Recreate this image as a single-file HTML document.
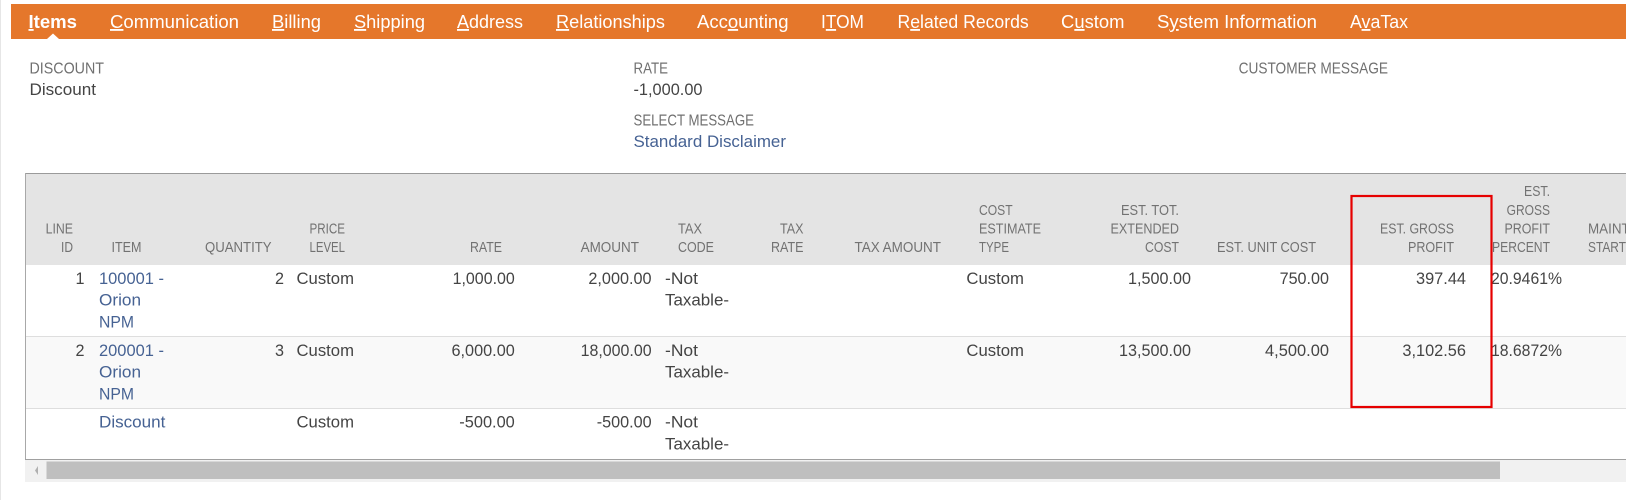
<!DOCTYPE html>
<html lang="en"><head><meta charset="utf-8"><title>Items</title>
<style>
html,body{margin:0;padding:0;background:#fff;width:1626px;height:500px;overflow:hidden}
svg{display:block}
text{font-family:"Liberation Sans",sans-serif;white-space:pre}
.n{font-size:18.5px;fill:#fff}
.l{font-size:15.5px;fill:#707070}
.h{font-size:14.8px;fill:#727272}
.v{font-size:17px;fill:#444}
.a{font-size:17px;fill:#466293}
</style></head><body>
<svg xmlns="http://www.w3.org/2000/svg" width="1626" height="500" viewBox="0 0 1626 500">
<rect x="0" y="0" width="1" height="500" fill="#e6e6e6"/>
<rect x="11" y="4" width="1615" height="35" fill="#e5772b"/>
<polygon points="47,39 53,33.500 59,39" fill="#fff"/>
<g class="nav">
<text class="n" y="28" x="28.500" textLength="48.500" lengthAdjust="spacingAndGlyphs" font-weight="700"><tspan text-decoration="underline">I</tspan>tems</text>
<text class="n" y="28" x="110" textLength="129" lengthAdjust="spacingAndGlyphs"><tspan text-decoration="underline">C</tspan>ommunication</text>
<text class="n" y="28" x="272" textLength="49" lengthAdjust="spacingAndGlyphs"><tspan text-decoration="underline">B</tspan>illing</text>
<text class="n" y="28" x="354" textLength="71" lengthAdjust="spacingAndGlyphs"><tspan text-decoration="underline">S</tspan>hipping</text>
<text class="n" y="28" x="457" textLength="66" lengthAdjust="spacingAndGlyphs"><tspan text-decoration="underline">A</tspan>ddress</text>
<text class="n" y="28" x="556" textLength="109" lengthAdjust="spacingAndGlyphs"><tspan text-decoration="underline">R</tspan>elationships</text>
<text class="n" y="28" x="697" textLength="91.500" lengthAdjust="spacingAndGlyphs">Acc<tspan text-decoration="underline">o</tspan>unting</text>
<text class="n" y="28" x="821" textLength="43" lengthAdjust="spacingAndGlyphs">I<tspan text-decoration="underline">T</tspan>OM</text>
<text class="n" y="28" x="897.500" textLength="131.200" lengthAdjust="spacingAndGlyphs">R<tspan text-decoration="underline">e</tspan>lated Records</text>
<text class="n" y="28" x="1061" textLength="63.500" lengthAdjust="spacingAndGlyphs">C<tspan text-decoration="underline">u</tspan>stom</text>
<text class="n" y="28" x="1157" textLength="160" lengthAdjust="spacingAndGlyphs">S<tspan text-decoration="underline">y</tspan>stem Information</text>
<text class="n" y="28" x="1350" textLength="58" lengthAdjust="spacingAndGlyphs">A<tspan text-decoration="underline">v</tspan>aTax</text>
</g>
<text class="l" y="73.500" x="29.500" textLength="74.500" lengthAdjust="spacingAndGlyphs">DISCOUNT</text>
<text class="v" y="95" x="29.500" textLength="66.500" lengthAdjust="spacingAndGlyphs">Discount</text>
<text class="l" y="73.500" x="633.500" textLength="34.500" lengthAdjust="spacingAndGlyphs">RATE</text>
<text class="v" y="95" x="633.500" textLength="69" lengthAdjust="spacingAndGlyphs">-1,000.00</text>
<text class="l" y="125.500" x="633.500" textLength="120.500" lengthAdjust="spacingAndGlyphs">SELECT MESSAGE</text>
<text class="a" y="147" x="633.500" textLength="152.500" lengthAdjust="spacingAndGlyphs">Standard Disclaimer</text>
<text class="l" y="73.500" x="1238.600" textLength="149.400" lengthAdjust="spacingAndGlyphs">CUSTOMER MESSAGE</text>

<rect x="25" y="174" width="1601" height="91" fill="#e4e4e4"/>
<rect x="25" y="337" width="1601" height="71" fill="#f9f9f9"/>
<rect x="25" y="173" width="1601" height="1" fill="#9a9a9a"/>
<rect x="25" y="173" width="1" height="287" fill="#a8a8a8"/>
<rect x="26" y="336" width="1600" height="1" fill="#dedede"/>
<rect x="26" y="408" width="1600" height="1" fill="#dedede"/>
<rect x="25" y="459" width="1601" height="1" fill="#a0a0a0"/>
<rect x="25" y="460" width="1601" height="22" fill="#f1f1f1"/>
<rect x="46.500" y="461.500" width="1453.500" height="17.500" fill="#bfbfbf"/>
<polygon points="38,466 35,470.500 38,475" fill="#b0b0b0"/>

<text class="h" y="233.500" x="45.600" textLength="27.400" lengthAdjust="spacingAndGlyphs">LINE</text>
<text class="h" y="252" x="61" textLength="12" lengthAdjust="spacingAndGlyphs">ID</text>
<text class="h" y="252" x="111.500" textLength="30" lengthAdjust="spacingAndGlyphs">ITEM</text>
<text class="h" y="252" x="205" textLength="66.600" lengthAdjust="spacingAndGlyphs">QUANTITY</text>
<text class="h" y="233.500" x="309.500" textLength="35.500" lengthAdjust="spacingAndGlyphs">PRICE</text>
<text class="h" y="252" x="309.500" textLength="35.500" lengthAdjust="spacingAndGlyphs">LEVEL</text>
<text class="h" y="252" x="470" textLength="32" lengthAdjust="spacingAndGlyphs">RATE</text>
<text class="h" y="252" x="580.600" textLength="58.400" lengthAdjust="spacingAndGlyphs">AMOUNT</text>
<text class="h" y="233.500" x="678" textLength="24" lengthAdjust="spacingAndGlyphs">TAX</text>
<text class="h" y="252" x="678" textLength="36" lengthAdjust="spacingAndGlyphs">CODE</text>
<text class="h" y="233.500" x="780" textLength="23.500" lengthAdjust="spacingAndGlyphs">TAX</text>
<text class="h" y="252" x="771" textLength="32.500" lengthAdjust="spacingAndGlyphs">RATE</text>
<text class="h" y="252" x="854.500" textLength="86.500" lengthAdjust="spacingAndGlyphs">TAX AMOUNT</text>
<text class="h" y="215" x="979" textLength="33.600" lengthAdjust="spacingAndGlyphs">COST</text>
<text class="h" y="233.500" x="979" textLength="62" lengthAdjust="spacingAndGlyphs">ESTIMATE</text>
<text class="h" y="252" x="979" textLength="30" lengthAdjust="spacingAndGlyphs">TYPE</text>
<text class="h" y="215" x="1121" textLength="58" lengthAdjust="spacingAndGlyphs">EST. TOT.</text>
<text class="h" y="233.500" x="1110.500" textLength="68.500" lengthAdjust="spacingAndGlyphs">EXTENDED</text>
<text class="h" y="252" x="1145" textLength="34" lengthAdjust="spacingAndGlyphs">COST</text>
<text class="h" y="252" x="1217" textLength="99" lengthAdjust="spacingAndGlyphs">EST. UNIT COST</text>
<text class="h" y="233.500" x="1380" textLength="74" lengthAdjust="spacingAndGlyphs">EST. GROSS</text>
<text class="h" y="252" x="1408" textLength="46" lengthAdjust="spacingAndGlyphs">PROFIT</text>
<text class="h" y="196" x="1524" textLength="26" lengthAdjust="spacingAndGlyphs">EST.</text>
<text class="h" y="215" x="1506.600" textLength="43.400" lengthAdjust="spacingAndGlyphs">GROSS</text>
<text class="h" y="233.500" x="1504.500" textLength="45.500" lengthAdjust="spacingAndGlyphs">PROFIT</text>
<text class="h" y="252" x="1492" textLength="58" lengthAdjust="spacingAndGlyphs">PERCENT</text>
<text class="h" y="233.500" x="1588" textLength="44" lengthAdjust="spacingAndGlyphs">MAINT.</text>
<text class="h" y="252" x="1588" textLength="38" lengthAdjust="spacingAndGlyphs">START</text>

<text class="v" y="284" x="75.500" textLength="9" lengthAdjust="spacingAndGlyphs">1</text>
<text class="a" y="284" x="99" textLength="65" lengthAdjust="spacingAndGlyphs">100001 -</text>
<text class="a" y="305.700" x="99" textLength="42" lengthAdjust="spacingAndGlyphs">Orion</text>
<text class="a" y="327.700" x="99" textLength="35" lengthAdjust="spacingAndGlyphs">NPM</text>
<text class="v" y="284" x="275" textLength="9" lengthAdjust="spacingAndGlyphs">2</text>
<text class="v" y="284" x="296.500" textLength="57.500" lengthAdjust="spacingAndGlyphs">Custom</text>
<text class="v" y="284" x="452.600" textLength="62.200" lengthAdjust="spacingAndGlyphs">1,000.00</text>
<text class="v" y="284" x="588.400" textLength="63.200" lengthAdjust="spacingAndGlyphs">2,000.00</text>
<text class="v" y="284" x="665" textLength="33" lengthAdjust="spacingAndGlyphs">-Not</text>
<text class="v" y="305.700" x="665" textLength="64" lengthAdjust="spacingAndGlyphs">Taxable-</text>
<text class="v" y="284" x="966.400" textLength="57.600" lengthAdjust="spacingAndGlyphs">Custom</text>
<text class="v" y="284" x="1128" textLength="63" lengthAdjust="spacingAndGlyphs">1,500.00</text>
<text class="v" y="284" x="1279.600" textLength="49.400" lengthAdjust="spacingAndGlyphs">750.00</text>
<text class="v" y="284" x="1416" textLength="50" lengthAdjust="spacingAndGlyphs">397.44</text>
<text class="v" y="284" x="1491" textLength="71" lengthAdjust="spacingAndGlyphs">20.9461%</text>

<text class="v" y="356" x="75.500" textLength="9" lengthAdjust="spacingAndGlyphs">2</text>
<text class="a" y="356" x="99" textLength="65" lengthAdjust="spacingAndGlyphs">200001 -</text>
<text class="a" y="377.700" x="99" textLength="42" lengthAdjust="spacingAndGlyphs">Orion</text>
<text class="a" y="399.700" x="99" textLength="35" lengthAdjust="spacingAndGlyphs">NPM</text>
<text class="v" y="356" x="275" textLength="9" lengthAdjust="spacingAndGlyphs">3</text>
<text class="v" y="356" x="296.500" textLength="57.500" lengthAdjust="spacingAndGlyphs">Custom</text>
<text class="v" y="356" x="451.500" textLength="63.300" lengthAdjust="spacingAndGlyphs">6,000.00</text>
<text class="v" y="356" x="580.600" textLength="71" lengthAdjust="spacingAndGlyphs">18,000.00</text>
<text class="v" y="356" x="665" textLength="33" lengthAdjust="spacingAndGlyphs">-Not</text>
<text class="v" y="377.700" x="665" textLength="64" lengthAdjust="spacingAndGlyphs">Taxable-</text>
<text class="v" y="356" x="966.400" textLength="57.600" lengthAdjust="spacingAndGlyphs">Custom</text>
<text class="v" y="356" x="1119" textLength="72" lengthAdjust="spacingAndGlyphs">13,500.00</text>
<text class="v" y="356" x="1265" textLength="64" lengthAdjust="spacingAndGlyphs">4,500.00</text>
<text class="v" y="356" x="1402.400" textLength="63.600" lengthAdjust="spacingAndGlyphs">3,102.56</text>
<text class="v" y="356" x="1491" textLength="71" lengthAdjust="spacingAndGlyphs">18.6872%</text>

<text class="a" y="427.700" x="99" textLength="66.400" lengthAdjust="spacingAndGlyphs">Discount</text>
<text class="v" y="427.700" x="296.500" textLength="57.500" lengthAdjust="spacingAndGlyphs">Custom</text>
<text class="v" y="427.700" x="459.300" textLength="55.500" lengthAdjust="spacingAndGlyphs">-500.00</text>
<text class="v" y="427.700" x="596.700" textLength="54.900" lengthAdjust="spacingAndGlyphs">-500.00</text>
<text class="v" y="427.700" x="665" textLength="33" lengthAdjust="spacingAndGlyphs">-Not</text>
<text class="v" y="449.300" x="665" textLength="64" lengthAdjust="spacingAndGlyphs">Taxable-</text>

<rect x="1351.500" y="196" width="140" height="211" fill="none" stroke="#e60000" stroke-width="2.200"/>
</svg>
</body></html>
